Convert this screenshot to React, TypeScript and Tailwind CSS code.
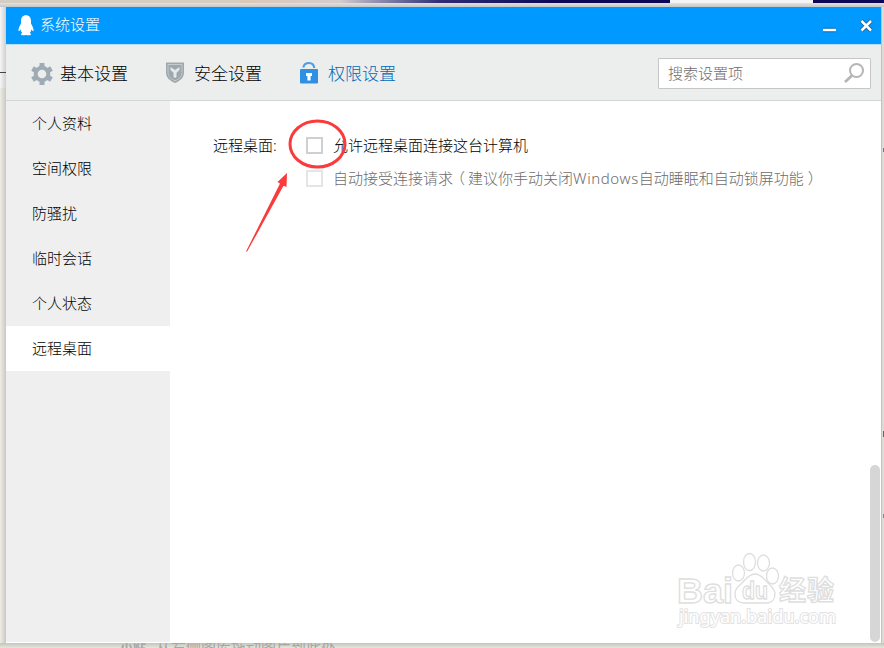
import React from 'react';

interface TabProps {
  label: string;
  icon: React.ReactNode;
  active?: boolean;
  className?: string;
}

const SECTIONS = ['个人资料', '空间权限', '防骚扰', '临时会话', '个人状态', '远程桌面'];

const PenguinIcon = () => (
  <svg width="16" height="21" viewBox="0 0 16 21" fill="white">
    <path d="M8 .3C4.700.3 3 2.700 3 6v2.500C2 10.500.5 12.800.4 15.200c0 1 .7 1.300 1.400.3l.7-1c.3 1.500 1 2.700 1.700 3.600-1.500.6-1.700 2.200.2 2.200 1.500 0 2.600-.4 3.600-.4s2.100.4 3.600.4c1.900 0 1.700-1.600.2-2.200.8-.9 1.400-2.100 1.700-3.600l.7 1c.7 1 1.400.7 1.400-.3-.1-2.400-1.600-4.700-2.600-6.700V6c0-3.300-1.700-5.700-5-5.700z" />
  </svg>
);

const GearIcon = () => (
  <svg width="22" height="24" viewBox="0 0 22 24">
    <g fill="#9fabb4">
      <rect x="8.500" y="1" width="5" height="22" />
      <rect x="8.500" y="1" width="5" height="22" transform="rotate(60 11 12)" />
      <rect x="8.500" y="1" width="5" height="22" transform="rotate(120 11 12)" />
      <circle cx="11" cy="12" r="8.300" />
    </g>
    <circle cx="11" cy="12" r="4.300" fill="#eceeee" />
  </svg>
);

const ShieldIcon = () => (
  <svg width="20" height="23" viewBox="0 0 20 23">
    <path d="M1 1.500h18v10c0 5-4 8.500-9 10.500-5-2-9-5.500-9-10.500z" fill="#9da7ae" />
    <path d="M3 3.500h14v8c0 4-3 6.600-7 8.300-4-1.700-7-4.300-7-8.300z" fill="none" stroke="#c5cbcf" />
    <path d="M5.500 6l4.500 3 4.500-3v3l-3 2.700V16l-1.500 1-1.500-1v-4.300l-3-2.700z" fill="#e4e8ea" />
  </svg>
);

const LockIcon = () => (
  <svg width="20" height="23" viewBox="0 0 20 23">
    <path d="M4.300 6.500C4.900 3.300 7 2 10 2s5 1.600 5.200 5" fill="none" stroke="#4a9fe8" strokeWidth="2.200" />
    <rect x="1" y="8" width="18" height="14.500" rx="1" fill="#2f8fe3" />
    <path d="M7 12h6v3h-1.400v4.500H8.400V15H7z" fill="white" />
  </svg>
);

const Tab: React.FC<TabProps> = ({ label, icon, active, className }) => (
  <div className={`flex items-center ${active ? 'text-[#0068b4]' : 'text-black'} ${className ?? ''}`}>
    {icon}
    <span className="text-[17px] leading-6">{label}</span>
  </div>
);

const TitleBar = () => (
  <header className="flex h-[38px] shrink-0 items-center border-b border-[#b5e0fb] bg-[#0099ff] pb-[3px] pl-3 pr-1.5">
    <span className="pt-[3px]"><PenguinIcon /></span>
    <span className="ml-1.5 text-[15px] leading-5 text-white">系统设置</span>
    <svg className="ml-auto mt-[3px]" width="54" height="18" viewBox="0 0 54 18" fill="none">
      <path d="M2 13h13M40.500 4l9.500 9.500M50 4l-9.500 9.500" stroke="#1267a5" strokeWidth="4.500" />
      <path d="M2 13h13M40.500 4l9.500 9.500M50 4l-9.500 9.500" stroke="white" strokeWidth="2.500" />
    </svg>
  </header>
);

const Toolbar = () => (
  <nav className="flex h-14 shrink-0 items-center border-b border-[#d4d6d6] bg-[#eceeee] pl-[25px] pr-[10px] pt-[3px]">
    <Tab label="基本设置" icon={<span className="mr-[7px]"><GearIcon /></span>} />
    <Tab label="安全设置" icon={<span className="mb-[3px] mr-[9px]"><ShieldIcon /></span>} className="ml-[37px]" />
    <Tab label="权限设置" icon={<span className="mb-[3px] mr-[9px]"><LockIcon /></span>} active className="ml-[37px]" />
    <div className="mb-0.5 ml-auto flex h-[31px] w-[213px] items-center justify-between rounded-[1px] border border-[#c6c6c6] bg-white pl-[9px] pr-[5px] text-[15px] text-[#6c6c6c]">
      <span>搜索设置项</span>
      <svg width="22" height="22" viewBox="0 0 22 22" fill="none" stroke="#b5b5b5">
        <circle cx="13.500" cy="8.500" r="6.500" strokeWidth="2" />
        <path d="M9 13.500L2 20" strokeWidth="2.800" />
      </svg>
    </div>
  </nav>
);

const Sidebar = () => (
  <aside className="w-[164px] shrink-0 bg-[#efefef]">
    {SECTIONS.map((name) => (
      <div
        key={name}
        className={`flex h-[45px] items-center pl-[26px] ${name === '远程桌面' ? 'bg-white' : ''}`}
      >
        {name}
      </div>
    ))}
  </aside>
);

// Hand drawn hint around the first checkbox
const Annotation = () => (
  <svg className="absolute left-[240px] top-[115px]" width="115" height="142" viewBox="240 115 115 142">
    <ellipse cx="317.500" cy="144" rx="27.500" ry="23" fill="none" stroke="#fb3b3b" strokeWidth="3" />
    <path d="M246 251.500L280 183.500l-2.500-1.500L287 173l-.5 14-3-1.200L247.200 251.500z" fill="#fb3b3b" />
  </svg>
);

const Watermark = () => (
  <svg
    className="absolute left-[670px] top-[546px]"
    width="175"
    height="90"
    viewBox="670 546 175 90"
    fill="white"
    stroke="#dedede"
    strokeWidth="1.300"
    fontFamily="'Liberation Sans', 'Noto Sans CJK SC', sans-serif"
  >
    <g fontWeight="bold" fontSize="35">
      <text x="677" y="602.500" textLength="56" lengthAdjust="spacingAndGlyphs">Bai</text>
      <text x="779" y="600" fontSize="27" textLength="55">经验</text>
    </g>
    <ellipse cx="738.500" cy="573" rx="6" ry="8" />
    <ellipse cx="749.500" cy="562" rx="6" ry="8.500" />
    <ellipse cx="763.500" cy="563" rx="6" ry="8" />
    <ellipse cx="772.500" cy="576" rx="6" ry="8" />
    <path d="M755 574c-6 0-9 5-13 9-4 3.500-7 6-7 11 0 6 4 9 9 9h22c6 0 9-4 9-9 0-5-4-8-7-11-4-4-7-9-13-9z" />
    <text x="742" y="599" fontSize="24" fontWeight="bold" textLength="26" lengthAdjust="spacingAndGlyphs">du</text>
    <text
      x="679"
      y="623"
      fontSize="18"
      fontWeight="400"
      fontFamily="'Noto Sans', sans-serif"
      textLength="157"
      lengthAdjust="spacingAndGlyphs"
      stroke="#e2e2e2"
      strokeWidth="2"
      paintOrder="stroke"
    >
      jingyan.baidu.com
    </text>
  </svg>
);

const Content = () => (
  <main className="flex flex-1 justify-between">
    <div className="flex pl-[43px] pt-[33px] leading-[22px]">
      <span className="w-[93px]">远程桌面:</span>
      <div className="flex flex-col gap-[11px]">
        <div className="flex items-center">
          <span className="mr-2.5 size-[17px] border-2 border-[#d0d0d0] bg-white" />
          <span>允许远程桌面连接这台计算机</span>
        </div>
        <div className="flex items-center whitespace-nowrap text-[#6c6c6c]">
          <span className="mr-2.5 size-[17px] border-2 border-[#e5e5e5] bg-white" />
          <span>
            自动接受连接请求<span className="inline-block -translate-x-[3px]">（</span>建议你手动关闭<span className="tracking-[0.6px]">Windows</span>自动睡眠和自动锁屏功能<span className="inline-block translate-x-1">）</span>
          </span>
        </div>
      </div>
    </div>
    <div className="mr-px h-[177px] w-2.5 self-end rounded-full bg-[#d6d6d6]" />
  </main>
);

export default function App() {
  return (
    <div className="relative flex h-[648px] w-[884px] flex-col overflow-hidden bg-[#e4e4da] font-['Noto_Sans','Noto_Sans_CJK_SC',sans-serif] text-[15px] font-light text-black">
      {/* Desktop strip above the window */}
      <div className="flex h-[3px] shrink-0">
        <div className="w-[240px] bg-[#d6cdc2]" />
        <div className="w-[200px] bg-linear-to-r from-[#dcc8b4] via-[#d5ccd0] to-[#302c75]" />
        <div className="w-[230px] bg-linear-to-r from-[#302c75] via-[#0c0757] to-[#0c0757]" />
        <div className="w-[143px] bg-[#f4f4f4]" />
        <div className="flex-1 bg-[#0c0757]" />
      </div>
      <div className="h-1 shrink-0 bg-linear-to-b from-[#e2e2e2] to-[#c5c5c5]" />
      <div className="flex h-[636px] shrink-0">
        <div className="w-1.5 bg-linear-to-r from-[#eeeee5] to-[#c9c9c2]">
          <div className="h-[81px] bg-linear-to-r from-[#f6f6f6] to-[#cfcfcf] pt-[65px]">
            <div className="h-px bg-[#444444]" />
          </div>
        </div>
        <section className="flex w-[875px] flex-col bg-white">
          <TitleBar />
          <Toolbar />
          <div className="flex flex-1">
            <Sidebar />
            <Content />
          </div>
          <div className="h-px bg-white" />
        </section>
        <div className="w-px bg-[#99cdf2]" />
        <div className="flex-1 bg-[#dcdcd5]">
          <div className="ml-px mt-[141px] h-1 bg-[#777777]" />
          <div className="ml-px mt-[279px] h-1.5 bg-[#666666]" />
          <div className="ml-px mt-[77px] h-1 bg-[#888888]" />
        </div>
      </div>
      <div className="flex flex-1 overflow-hidden bg-linear-to-b from-[#c4c5bb] to-[#e6e7db] pl-[120px] leading-[15px] text-[#a7a7a4]">
        <span className="-mt-[3px] w-[36px] whitespace-nowrap text-[13px] font-bold">小贴</span>
        <span className="-mt-[3px] whitespace-nowrap font-normal">从右侧图库拖动图片到此处</span>
      </div>
      <Annotation />
      <Watermark />
    </div>
  );
}
